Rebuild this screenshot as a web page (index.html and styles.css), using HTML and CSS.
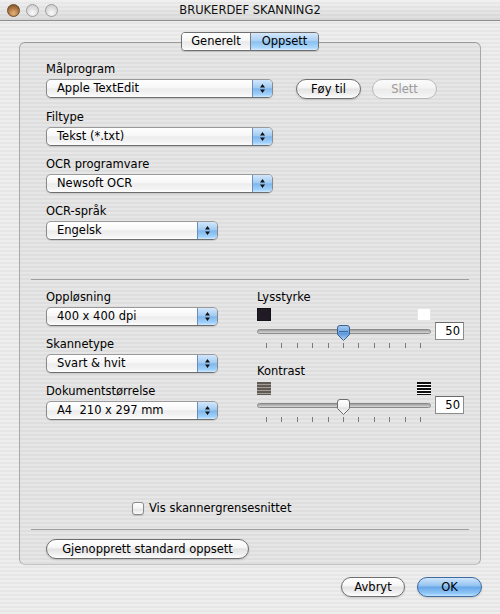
FILE: index.html
```html
<!DOCTYPE html>
<html lang="no">
<head>
<meta charset="utf-8">
<title>BRUKERDEF SKANNING2</title>
<link rel="stylesheet" href="styles.css">
</head>
<body>
<div class="window">
  <div class="titlebar">
    <div class="lights"><span class="light close"></span><span class="light"></span><span class="light"></span></div>
    <div class="title">BRUKERDEF SKANNING2</div>
    <div class="tb-spacer"></div>
  </div>
  <div class="content">
    <div class="tabs"><span class="tab first">Generelt</span><span class="tab sel">Oppsett</span></div>
    <div class="group">
      <div class="top">
        <div class="field">
          <div class="label">Målprogram</div>
          <div class="row">
            <div class="popup wide"><span class="txt">Apple TextEdit</span><span class="arrows"><svg width="5" height="9" viewBox="0 0 5 9"><path d="M2.5 0 L5 3.5 H0Z M0 5.5 H5 L2.5 9Z" fill="#111"/></svg></span></div>
            <button class="btn add">Føy til</button>
            <button class="btn del" disabled>Slett</button>
          </div>
        </div>
        <div class="field">
          <div class="label">Filtype</div>
          <div class="popup wide"><span class="txt">Tekst (*.txt)</span><span class="arrows"><svg width="5" height="9" viewBox="0 0 5 9"><path d="M2.5 0 L5 3.5 H0Z M0 5.5 H5 L2.5 9Z" fill="#111"/></svg></span></div>
        </div>
        <div class="field">
          <div class="label">OCR programvare</div>
          <div class="popup wide"><span class="txt">Newsoft OCR</span><span class="arrows"><svg width="5" height="9" viewBox="0 0 5 9"><path d="M2.5 0 L5 3.5 H0Z M0 5.5 H5 L2.5 9Z" fill="#111"/></svg></span></div>
        </div>
        <div class="field">
          <div class="label">OCR-språk</div>
          <div class="popup narrow"><span class="txt">Engelsk</span><span class="arrows"><svg width="5" height="9" viewBox="0 0 5 9"><path d="M2.5 0 L5 3.5 H0Z M0 5.5 H5 L2.5 9Z" fill="#111"/></svg></span></div>
        </div>
      </div>
      <div class="sep first-sep"></div>
      <div class="bottom">
        <div class="col-left">
          <div class="field">
            <div class="label">Oppløsning</div>
            <div class="popup narrow"><span class="txt">400 x 400 dpi</span><span class="arrows"><svg width="5" height="9" viewBox="0 0 5 9"><path d="M2.5 0 L5 3.5 H0Z M0 5.5 H5 L2.5 9Z" fill="#111"/></svg></span></div>
          </div>
          <div class="field">
            <div class="label">Skannetype</div>
            <div class="popup narrow"><span class="txt">Svart &amp; hvit</span><span class="arrows"><svg width="5" height="9" viewBox="0 0 5 9"><path d="M2.5 0 L5 3.5 H0Z M0 5.5 H5 L2.5 9Z" fill="#111"/></svg></span></div>
          </div>
          <div class="field">
            <div class="label">Dokumentstørrelse</div>
            <div class="popup narrow"><span class="txt">A4&nbsp; 210 x 297 mm</span><span class="arrows"><svg width="5" height="9" viewBox="0 0 5 9"><path d="M2.5 0 L5 3.5 H0Z M0 5.5 H5 L2.5 9Z" fill="#111"/></svg></span></div>
          </div>
        </div>
        <div class="col-right">
          <div class="label">Lysstyrke</div>
          <div class="icons"><span class="sq black"></span><span class="sq white"></span></div>
          <div class="slider-row">
            <div class="track">
              <svg class="thumb" width="15" height="16" viewBox="0 0 15 16">
                <defs><linearGradient id="tb" x1="0" y1="0" x2="0" y2="1"><stop offset="0" stop-color="#a9cdf3"/><stop offset="0.45" stop-color="#6fa6e2"/><stop offset="0.55" stop-color="#5a96da"/><stop offset="1" stop-color="#b9ddfb"/></linearGradient></defs>
                <path d="M1.5 3 Q1.5 0.5 4 0.5 H11 Q13.5 0.5 13.5 3 V9.5 L7.5 15.5 L1.5 9.5 Z" fill="url(#tb)" stroke="#3c5f8c"/>
                <path d="M3 6.5 H12" stroke="#2f5585" stroke-width="0.8"/>
              </svg>
            </div>
            <div class="val">50</div>
          </div>
          <div class="ticks"><i></i><i></i><i></i><i></i><i></i><i></i><i></i><i></i><i></i><i></i><i></i></div>
          <div class="label second">Kontrast</div>
          <div class="icons"><span class="sq low"></span><span class="sq high"></span></div>
          <div class="slider-row">
            <div class="track">
              <svg class="thumb" width="15" height="16" viewBox="0 0 15 16">
                <defs><linearGradient id="tw" x1="0" y1="0" x2="0" y2="1"><stop offset="0" stop-color="#ffffff"/><stop offset="0.5" stop-color="#f2f2f2"/><stop offset="0.55" stop-color="#e2e2e2"/><stop offset="1" stop-color="#fafafa"/></linearGradient></defs>
                <path d="M1.5 3 Q1.5 0.5 4 0.5 H11 Q13.5 0.5 13.5 3 V9.5 L7.5 15.5 L1.5 9.5 Z" fill="url(#tw)" stroke="#6e6e6e"/>
              </svg>
            </div>
            <div class="val">50</div>
          </div>
          <div class="ticks"><i></i><i></i><i></i><i></i><i></i><i></i><i></i><i></i><i></i><i></i><i></i></div>
        </div>
      </div>
      <div class="check-row"><span class="checkbox"></span><span class="check-label">Vis skannergrensesnittet</span></div>
      <div class="sep second-sep"></div>
      <div class="reset-row"><button class="btn reset">Gjenopprett standard oppsett</button></div>
    </div>
    <div class="actions">
      <button class="btn cancel">Avbryt</button>
      <button class="btn ok">OK</button>
    </div>
  </div>
</div>
</body>
</html>
```

FILE: styles.css
```css
* { box-sizing: border-box; margin: 0; padding: 0; }
html, body { margin: 0; width: 500px; height: 614px; overflow: hidden; }
body {
  font-family: "DejaVu Sans", "Lucida Grande", sans-serif;
  font-size: 11.5px;
  color: #000;
}
.window {
  width: 500px;
  height: 614px;
  display: flex;
  flex-direction: column;
  background: repeating-linear-gradient(to bottom, #eeeeee 0, #eeeeee 2px, #e6e6e6 2px, #e6e6e6 4px);
}

/* title bar */
.titlebar {
  height: 21px;
  flex: none;
  display: flex;
  align-items: center;
  border-bottom: 1px solid #8e8e8e;
  background:
    linear-gradient(to bottom, rgba(255,255,255,0.35), rgba(0,0,0,0.05)),
    repeating-linear-gradient(to bottom, #e9e9e9 0, #e9e9e9 2px, #e0e0e0 2px, #e0e0e0 4px);
}
.lights { display: flex; gap: 6px; padding-left: 7px; width: 58px; flex: none; }
.light {
  width: 13px; height: 13px; border-radius: 50%;
  border: 1px solid #9c9c9c;
  background: radial-gradient(circle at 50% 72%, #fbfbfb 0, #e2e2e2 45%, #c4c4c4 100%);
}
.light.close {
  border-color: #6b4a2a;
  background: radial-gradient(circle at 50% 75%, #e6b47a 0, #b07a45 50%, #6e4522 100%);
}
.title { flex: 1; text-align: center; line-height: 20px; color: #111; }
.tb-spacer { width: 58px; flex: none; }

/* content */
.content { flex: 1; display: flex; flex-direction: column; padding: 0 19px; }

.tabs {
  align-self: center;
  margin-top: 11px;
  margin-bottom: -9px;
  height: 19px;
  display: flex;
  position: relative;
  z-index: 1;
  border: 1px solid #6f6f6f;
  border-radius: 4px;
  overflow: hidden;
  box-shadow: 0 1px 1px rgba(0,0,0,0.15);
}
.tab {
  line-height: 17px;
  text-align: center;
  background: linear-gradient(to bottom, #ffffff 0%, #f6f6f6 45%, #e9e9e9 52%, #f4f4f4 85%, #ffffff 100%);
}
.tab.first { width: 69px; border-right: 1px solid #7d7d7d; }
.tab.sel {
  width: 67px;
  background: linear-gradient(to bottom, #d5e8fb 0%, #a9d0f5 45%, #8bc0f0 52%, #a9d6fb 85%, #d6ecff 100%);
}

.group {
  height: 523px;
  flex: none;
  border: 1px solid #a8a8a8;
  border-top-color: #9a9a9a;
  border-bottom-color: #c2c2c2;
  border-radius: 6px;
  background: rgba(0,0,0,0.03);
  padding-top: 18px;
  display: flex;
  flex-direction: column;
}
.top { padding-left: 26px; }
.field { margin-bottom: 10px; }
.field:last-child { margin-bottom: 0; }
.label { height: 16px; line-height: 16px; margin-bottom: 2px; white-space: nowrap; }

.row { display: flex; align-items: flex-start; }

.popup {
  height: 19px;
  display: flex;
  border: 1px solid #8a8a8a;
  border-top-color: #9a9a9a;
  border-bottom-color: #6e6e6e;
  border-radius: 5px;
  background: linear-gradient(to bottom, #ffffff 0%, #f7f7f7 45%, #ececec 52%, #f5f5f5 85%, #ffffff 100%);
  box-shadow: 0 1px 1px rgba(0,0,0,0.12);
  overflow: hidden;
}
.popup.wide { width: 227px; }
.popup.narrow { width: 172px; }
.popup .txt { flex: 1; padding-left: 10px; line-height: 17px; white-space: nowrap; }
.popup .arrows {
  width: 20px;
  flex: none;
  display: flex;
  align-items: center;
  justify-content: center;
  border-left: 1px solid #6b8dba;
  background: linear-gradient(to bottom, #d3e7fb 0%, #a2ccf3 45%, #7fb6ec 52%, #9fd0fa 85%, #cfe9ff 100%);
}

.btn {
  font: inherit;
  color: #000;
  height: 20px;
  border: 1px solid #6e6e6e;
  border-radius: 10px;
  background: linear-gradient(to bottom, #ffffff 0%, #f7f7f7 40%, #e3e3e3 52%, #f0f0f0 80%, #ffffff 100%);
  box-shadow: 0 1px 2px rgba(0,0,0,0.18);
  text-align: center;
  line-height: 18px;
}
.btn.add { width: 65px; margin-left: 23px; }
.btn.del {
  width: 65px; margin-left: 11px;
  color: #9a9a9a;
  border-color: #b9b9b9;
  background: linear-gradient(to bottom, #fbfbfb 0%, #f3f3f3 45%, #ebebeb 52%, #f1f1f1 85%, #f8f8f8 100%);
  box-shadow: none;
}

.sep { height: 1px; background: #9e9e9e; margin: 0 11px; }
.first-sep { margin-top: 39px; }

.bottom { display: flex; align-items: flex-start; padding: 9px 0 0 26px; }
.col-left { width: 172px; flex: none; }
.col-right { width: 208px; margin-left: 39px; flex: none; }
.col-right .label { margin-bottom: 0; }
.col-right .label.second { margin-top: 15px; }

.icons { display: flex; justify-content: space-between; width: 174px; height: 13px; margin-top: 3px; }
.sq { width: 14px; height: 13px; display: block; }
.sq.black { background: #1f1a24; border: 1px solid #141018; }
.sq.white { background: #ffffff; border: 1px solid #e6e6e6; }
.sq.low { background: repeating-linear-gradient(to bottom, #5f5a53 0, #5f5a53 2px, #a29d95 2px, #a29d95 3px); }
.sq.high { background: repeating-linear-gradient(to bottom, #111111 0, #111111 2px, #ffffff 2px, #ffffff 3px); width: 14px; }

.slider-row { display: flex; align-items: center; height: 18px; margin-top: 1px; }
.track {
  position: relative;
  width: 174px;
  height: 5px;
  border: 1px solid #8a8a8a;
  border-radius: 3px;
  background: linear-gradient(to bottom, #9c9c9c, #d8d8d8);
}
.thumb { position: absolute; left: 78px; top: -5px; display: block; }
.val {
  width: 29px;
  height: 18px;
  margin-left: 4px;
  border: 1px solid #8c8c8c;
  border-top-color: #6c6c6c;
  background: #ffffff;
  text-align: right;
  padding-right: 3px;
  line-height: 16px;
}
.ticks { display: flex; justify-content: space-between; width: 164px; padding-left: 9px; margin-top: 3px; height: 5px; box-sizing: content-box; }
.ticks { width: 155px; }
.ticks i { display: block; width: 1px; height: 5px; background: #7a7a7a; }

.check-row { display: flex; align-items: center; height: 16px; margin-top: 78px; padding-left: 112px; }
.checkbox {
  width: 12px; height: 13px;
  border: 1px solid #8a8a8a;
  border-radius: 3px;
  background: linear-gradient(to bottom, #ffffff 0%, #f3f3f3 50%, #e4e4e4 55%, #fafafa 100%);
  box-shadow: 0 1px 1px rgba(0,0,0,0.15);
  margin-right: 5px;
}
.second-sep { margin-top: 13px; }
.reset-row { padding-left: 26px; margin-top: 9px; }
.btn.reset { width: 203px; }

.actions { display: flex; justify-content: flex-end; gap: 12px; margin-top: 12px; margin-right: -1px; }
.btn.cancel { width: 64px; }
.btn.ok {
  width: 65px;
  border-color: #3f6a9f;
  background: linear-gradient(to bottom, #cfe5fb 0%, #95c4f1 42%, #6aa7e8 52%, #8ec7f7 85%, #c4e4ff 100%);
}
```
